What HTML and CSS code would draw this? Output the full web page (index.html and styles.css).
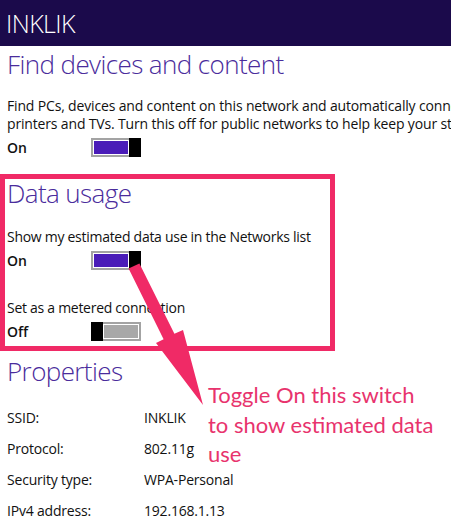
FILE: index.html
```html
<!DOCTYPE html>
<html>
<head>
<meta charset="utf-8">
<link rel="stylesheet" href="styles.css">
</head>
<body>
<div class="page">
  <header class="topbar">INKLIK</header>
  <section class="section find">
    <h2 class="title">Find devices and content</h2>
    <p class="desc">Find PCs, devices and content on this network and automatically connect to devices like<br>printers and TVs. Turn this off for public networks to help keep your stuff safe.</p>
    <div class="toggle-row">
      <span class="state">On</span>
      <span class="switch on"><span class="track"></span><span class="thumb"></span></span>
    </div>
  </section>
  <section class="highlight">
    <h2 class="title">Data usage</h2>
    <p class="label">Show my estimated data use in the Networks list</p>
    <div class="toggle-row">
      <span class="state">On</span>
      <span class="switch on"><span class="track"></span><span class="thumb"></span></span>
    </div>
    <p class="label second">Set as a metered connection</p>
    <div class="toggle-row">
      <span class="state">Off</span>
      <span class="switch off"><span class="thumb"></span><span class="track"></span></span>
    </div>
  </section>
  <section class="section props">
    <h2 class="title">Properties</h2>
    <dl class="prop-grid">
      <dt>SSID:</dt><dd>INKLIK</dd>
      <dt>Protocol:</dt><dd>802.11g</dd>
      <dt>Security type:</dt><dd>WPA-Personal</dd>
      <dt>IPv4 address:</dt><dd>192.168.1.13</dd>
    </dl>
  </section>
  <svg class="arrow" width="451" height="520" viewBox="0 0 451 520">
    <polygon points="128.6,268.6 139.4,263.4 174.4,333.8 183,330 203,405 156,343 163.6,339.2" fill="#f02a66"/>
  </svg>
  <p class="note">Toggle On this switch<br>to show estimated data<br>use</p>
</div>
</body>
</html>
```
FILE: styles.css
```css
* { box-sizing: border-box; }
html, body { margin: 0; padding: 0; background: #fff; }
body {
  width: 451px;
  height: 520px;
  overflow: hidden;
  font-family: "Open Sans", "Noto Sans", sans-serif;
  color: #111;
}
.page { position: relative; width: 451px; height: 520px; overflow: hidden; }
.topbar {
  height: 46px;
  background: #1b0a4b;
  color: #fff;
  font-size: 25px;
  font-weight: 300;
  padding-left: 6px;
  line-height: 46px;
  letter-spacing: -0.6px;
}
.title {
  margin: 0;
  font-weight: 300;
  color: #4a2c9c;
  font-size: 26px;
  line-height: 32px;
  letter-spacing: -0.6px;
  white-space: nowrap;
}
.section { padding-left: 7px; }
.find .title { margin-top: 2px; }
.desc {
  margin: 17px 0 0;
  font-size: 14px;
  line-height: 18px;
  white-space: nowrap;
  overflow: hidden;
  letter-spacing: -0.16px;
}
.toggle-row {
  display: flex;
  align-items: center;
  height: 19px;
  margin-top: 5px;
}
.state {
  width: 84px;
  font-size: 14px;
  font-weight: 600;
}
.switch {
  display: flex;
  width: 50px;
  height: 19px;
}
.switch .thumb { width: 12px; background: #000; }
.switch .track {
  flex: 1;
  border: 2px solid #a3a3a3;
  border-right: none;
  background: #fff;
}
.switch.on .track { background: #4a1cb8; box-shadow: inset 0 0 0 1px #fff; }
.switch.off .track {
  border: 2px solid #a3a3a3;
  border-left: none;
  background: #a8a8a8;
  box-shadow: inset 0 0 0 1px #fff;
}
.highlight {
  margin-top: 17px;
  width: 335px;
  height: 177px;
  border: 5px solid #f02a66;
  padding: 0 0 0 2px;
}
.highlight .title { margin-top: -2px; }
.label {
  margin: 19px 0 0;
  font-size: 14px;
  line-height: 18px;
  white-space: nowrap;
  letter-spacing: -0.28px;
}
.label.second { margin-top: 29px; }
.props .title { margin-top: 4px; }
.prop-grid {
  margin: 22px 0 0;
  display: grid;
  grid-template-columns: 137px 1fr;
  grid-auto-rows: 31px;
  font-size: 14px;
  letter-spacing: -0.2px;
}
.prop-grid dt, .prop-grid dd { margin: 0; line-height: 18px; }
.arrow { position: absolute; left: 0; top: 0; pointer-events: none; }
.note {
  position: absolute;
  left: 208px;
  top: 380px;
  margin: 0;
  font-family: Lato, "Open Sans", sans-serif;
  font-size: 22px;
  line-height: 29.5px;
  color: #e8336d;
}
```
